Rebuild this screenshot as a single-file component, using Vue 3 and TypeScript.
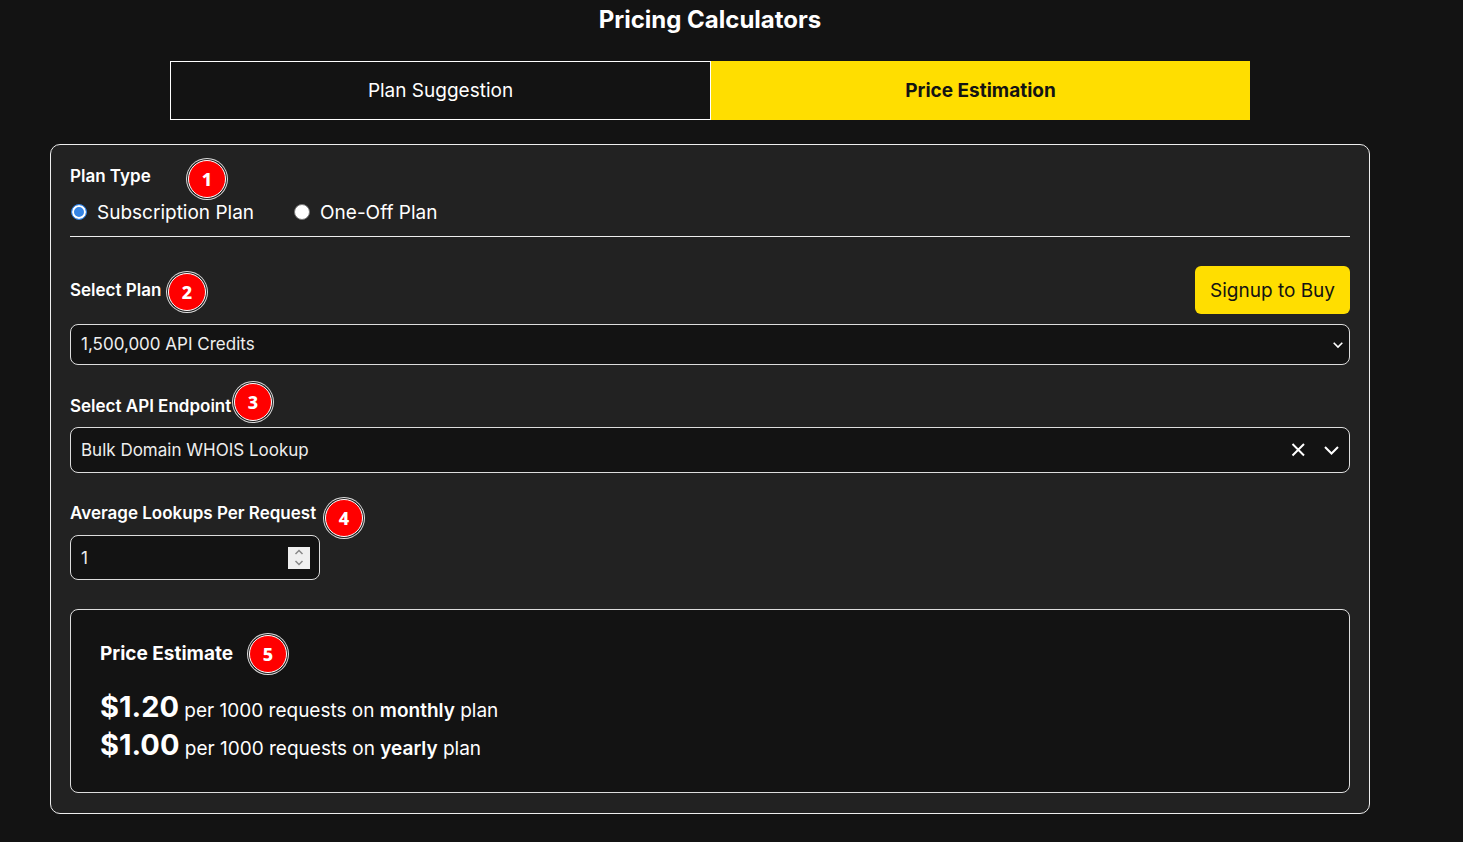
<script setup lang="ts">
import { ref } from 'vue'

const planType = ref('subscription')
const plan = ref('1500000')
const endpoint = ref('Bulk Domain WHOIS Lookup')
const lookups = ref(1)
const estimates = [
  { price: '$1.20', period: 'monthly' },
  { price: '$1.00', period: 'yearly' },
]
function step(by: number) {
  lookups.value = Math.max(1, lookups.value + by)
}
</script>

<template>
  <main class="page">
    <h1>Pricing Calculators</h1>
    <div class="tabs" role="tablist">
      <button class="tab" type="button" role="tab" aria-selected="false">Plan Suggestion</button>
      <button class="tab active" type="button" role="tab" aria-selected="true">Price Estimation</button>
    </div>

    <form class="card" @submit.prevent>
      <fieldset class="types">
        <legend class="label">Plan Type<span class="badge b1">1</span></legend>
        <div class="radios">
          <label><input v-model="planType" type="radio" name="type" value="subscription" />Subscription Plan</label>
          <label><input v-model="planType" type="radio" name="type" value="oneoff" />One-Off Plan</label>
        </div>
      </fieldset>

      <div class="plan-row">
        <label class="label" for="plan">Select Plan<span class="badge b2">2</span></label>
        <button class="signup" type="button">Signup to Buy</button>
      </div>
      <div class="select-wrap">
        <select id="plan" v-model="plan" class="field plan">
          <option value="1500000">1,500,000 API Credits</option>
        </select>
        <svg class="chev" width="12" height="8" viewBox="0 0 12 8"><path d="M1.7 1.700 6 6l4.300-4.300" /></svg>
      </div>

      <label class="label endpoint-label" for="endpoint">Select API Endpoint<span class="badge b3">3</span></label>
      <div class="field combo">
        <input id="endpoint" v-model="endpoint" type="text" />
        <button type="button" aria-label="Clear" @click="endpoint = ''">
          <svg width="14" height="14" viewBox="0 0 14 14"><path d="M1.500 1l11.500 11.500M13 1l-11.500 11.500" /></svg>
        </button>
        <button type="button" aria-label="Open list">
          <svg width="16" height="10" viewBox="0 0 16 10"><path d="M2 2l6.500 6.500L15 2" /></svg>
        </button>
      </div>

      <label class="label lookups-label" for="lookups">Average Lookups Per Request<span class="badge b4">4</span></label>
      <div class="field number">
        <input id="lookups" v-model.number="lookups" type="number" min="1" />
        <div class="spin">
          <button type="button" aria-label="Increase" @click="step(1)">
            <svg width="10" height="6" viewBox="0 0 10 6"><path d="M1.500 5 5 1.500 8.500 5" /></svg>
          </button>
          <button type="button" aria-label="Decrease" @click="step(-1)">
            <svg width="10" height="6" viewBox="0 0 10 6"><path d="M1.500 1 5 4.500 8.500 1" /></svg>
          </button>
        </div>
      </div>

      <section class="estimate">
        <h2>Price Estimate<span class="badge b5">5</span></h2>
        <p v-for="e in estimates" :key="e.period">
          <strong class="price">{{ e.price }}</strong> per 1000 requests on <strong>{{ e.period }}</strong> plan
        </p>
      </section>
    </form>
  </main>
</template>

<style>
body { background: #131313; }
</style>

<style scoped>
* { box-sizing: border-box; }
.page {
  padding: 0 93px 28px 50px;
  color: #fff;
  font-family: Inter, "Liberation Sans", sans-serif;
  font-size: 19px;
}
button, input, select { font: inherit; color: inherit; }
button { padding: 0; border: 0; background: none; cursor: pointer; }
svg { display: block; fill: none; stroke: #fff; stroke-width: 2; }
h1 {
  margin: 0;
  padding-top: 4px;
  font-size: 24px;
  line-height: 32px;
  font-weight: 700;
  text-align: center;
}
.tabs { display: flex; margin: 25px 120px 24px; }
.tab { flex: 1; height: 59px; border: 1px solid #fff; border-right: 0; }
.tab.active { border: 0; border-left: 1px solid #fff; background: #ffde00; color: #131313; font-weight: 700; }
.card {
  padding: 19px 19px 20px;
  border: 1px solid #eee;
  border-radius: 10px;
  background: #222;
}
.label {
  position: relative;
  display: block;
  width: fit-content;
  padding: 0;
  font-size: 17px;
  line-height: 24px;
  font-weight: 600;
}
.types { margin: 0; padding: 0 0 10px; border: 0; border-bottom: 1px solid #eee; }
.radios { display: flex; gap: 39px; padding-top: 12px; line-height: 26px; }
.radios label { display: flex; align-items: center; }
.radios input {
  appearance: none;
  width: 16px;
  height: 16px;
  margin: 0 10px 2px 1px;
  border: 1px solid #767676;
  border-radius: 50%;
  background: #fff;
}
.radios input:checked { border: 1px solid #3584e4; background: #3584e4; box-shadow: inset 0 0 0 2px #fff; }
.plan-row { display: flex; align-items: center; justify-content: space-between; margin: 29px 0 10px; }
.signup { height: 48px; padding: 0 15px; border-radius: 6px; background: #ffde00; color: #131313; }
.field {
  width: 100%;
  border: 1px solid #ddd;
  border-radius: 8px;
  background: #131313;
  color: #eee;
  font-size: 17px;
}
.select-wrap { position: relative; }
.plan { display: block; height: 41px; padding: 0 10px 1px; appearance: none; }
.chev { position: absolute; right: 6px; top: 17px; stroke-width: 1.6; pointer-events: none; }
.endpoint-label { margin: 29px 0 9px; }
.combo { display: flex; align-items: center; gap: 18px; height: 46px; padding: 0 10px; }
.combo input, .number input { flex: 1; min-width: 0; padding: 0; border: 0; outline: 0; background: none; }
.lookups-label { margin: 28px 0 10px; }
.number { display: flex; align-items: center; width: 250px; height: 45px; padding: 0 9px 0 10px; }
.number input { appearance: textfield; }
.number input::-webkit-inner-spin-button { display: none; }
.spin { width: 22px; background: #efefef; }
.spin button { display: grid; place-items: center; width: 22px; height: 11px; }
.spin svg { stroke: #888; stroke-width: 1.5; }
.estimate { margin-top: 29px; padding: 31px 29px 24px; border: 1px solid #ddd; border-radius: 8px; background: #131313; }
h2 { position: relative; width: fit-content; margin: 0 0 25px; font-size: 19px; line-height: 26px; font-weight: 700; }
p { margin: 0; line-height: 38px; }
strong { font-weight: 600; }
.price { font-size: 29px; line-height: 29px; font-weight: 700; }
.badge {
  position: absolute;
  z-index: 1;
  width: 38px;
  height: 38px;
  border: 1px solid #fff;
  border-radius: 50%;
  background: #f00;
  box-shadow: 0 0 0 1px #222, 0 0 0 2px #ddd;
  font: 800 18px/36px "Noto Sans", sans-serif;
  text-align: center;
}
.b1 { left: 118px; top: -4px; }
.b2 { left: 98px; top: -5px; }
.b3 { left: 164px; top: -11px; }
.b4 { left: 255px; top: -2px; }
.b5 { left: 149px; top: -6px; }
</style>
